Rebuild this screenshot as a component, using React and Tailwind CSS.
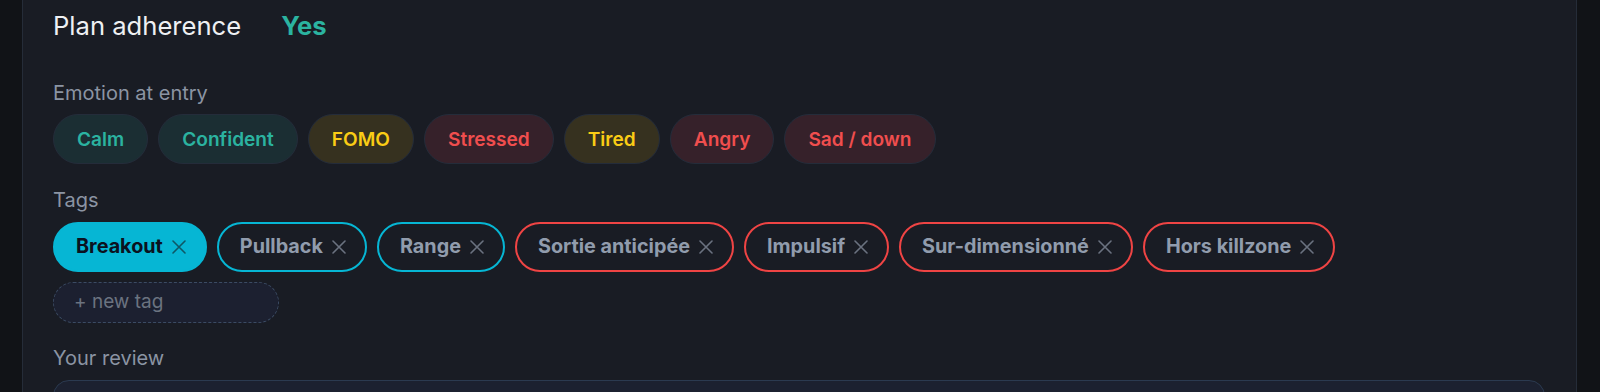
const emotions = [
  { label: 'Calm', tone: 'teal' },
  { label: 'Confident', tone: 'teal' },
  { label: 'FOMO', tone: 'yellow' },
  { label: 'Stressed', tone: 'red' },
  { label: 'Tired', tone: 'yellow' },
  { label: 'Angry', tone: 'red' },
  { label: 'Sad / down', tone: 'red' },
]

const emotionTone = {
  teal: 'bg-[#1b2e33] text-[#2bb3a0]',
  yellow: 'bg-[#36311f] text-[#facc15]',
  red: 'bg-[#36212a] text-[#f04e4e]',
}

const tags = [
  { label: 'Breakout', kind: 'active' },
  { label: 'Pullback', kind: 'setup' },
  { label: 'Range', kind: 'setup' },
  { label: 'Sortie anticipée', kind: 'mistake' },
  { label: 'Impulsif', kind: 'mistake' },
  { label: 'Sur-dimensionné', kind: 'mistake' },
  { label: 'Hors killzone', kind: 'mistake' },
]

const tagKind = {
  active: 'bg-[#06b6d4] border-[#06b6d4] text-[#0b1220]',
  setup: 'border-[#06b6d4] text-[#919cad]',
  mistake: 'border-[#ef4444] text-[#919cad]',
}

function Cross({ className }) {
  return (
    <svg width="14" height="14" viewBox="0 0 14 14" className={className}>
      <path d="M1 1 L13 13 M13 1 L1 13" stroke="currentColor" strokeWidth="1.6" strokeLinecap="round" />
    </svg>
  )
}

function Label({ children, className = 'mb-2' }) {
  return <p className={`text-[20px] leading-[28px] text-[#8b94a3] ${className}`}>{children}</p>
}

export default function App() {
  return (
    <div className="h-[392px] overflow-hidden bg-[#111317] pl-[22px] pr-[23px] font-['Inter',sans-serif]">
      <div className="h-full border-x border-[#252c38] bg-[#191c24] pl-[30px] pr-[31px] pt-[10px]">
        {/* plan adherence */}
        <div className="flex items-center gap-10 h-[32px]">
          <span className="text-[25.6px] text-[#eef0f3]">Plan adherence</span>
          <span className="text-[25.6px] font-bold text-[#2bb3a0]">Yes</span>
        </div>

        {/* emotion */}
        <div className="mt-[37px]">
          <Label className="mb-[7px]">Emotion at entry</Label>
          <div className="flex flex-wrap gap-[10px]">
            {emotions.map(e => (
              <span
                key={e.label}
                className={`h-[50px] px-[23px] flex items-center rounded-full border border-[#242c3a] text-[19.1px] font-semibold ${emotionTone[e.tone]}`}
              >
                {e.label}
              </span>
            ))}
          </div>
        </div>

        {/* tags */}
        <div className="mt-[22px]">
          <Label>Tags</Label>
          <div className="flex flex-wrap gap-[10px]">
            {tags.map(t => (
              <span
                key={t.label}
                className={`h-[50px] pl-[21px] pr-[19px] flex items-center gap-[9px] rounded-full border-2 text-[19.8px] font-bold ${tagKind[t.kind]}`}
              >
                {t.label}
                <Cross className={t.kind === 'active' ? 'text-[#0e5866]' : 'text-[#6b7280]'} />
              </span>
            ))}
          </div>
          <div className="mt-[10px] w-[226px] h-[41px] rounded-full border border-dashed border-[#3b4b63] bg-[#1c2030] pl-[20px] flex items-center text-[19px] text-[#6b7380]">
            + new tag
          </div>
        </div>

        {/* review */}
        <div className="mt-[21px]">
          <Label>Your review</Label>
          <div className="h-[120px] rounded-2xl border border-[#2b3a50] bg-[#1c2130]" />
        </div>
      </div>
    </div>
  )
}
